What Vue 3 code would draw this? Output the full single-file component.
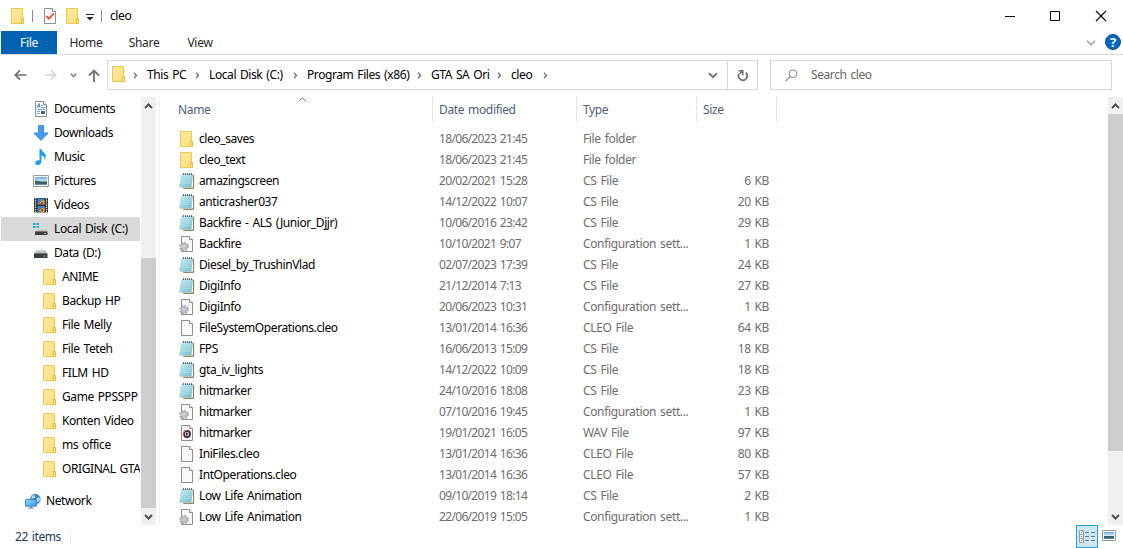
<template>
  <div class="window">
    <svg class="sprite" width="0" height="0">
      <defs>
        <linearGradient id="gFolder" x1="0" y1="0" x2="1" y2="1">
          <stop offset="0" stop-color="#ffe9a2" />
          <stop offset="1" stop-color="#ffdf7c" />
        </linearGradient>
        <linearGradient id="gNote" x1="0" y1="0" x2="1" y2="1">
          <stop offset="0" stop-color="#d2eef4" />
          <stop offset="1" stop-color="#6dbccd" />
        </linearGradient>
        <linearGradient id="gPic" x1="0" y1="0" x2="0" y2="1">
          <stop offset="0" stop-color="#5ea6ea" />
          <stop offset="0.5" stop-color="#d5ecfa" />
          <stop offset="0.6" stop-color="#3d6b5c" />
          <stop offset="0.75" stop-color="#29536a" />
          <stop offset="1" stop-color="#6fa4cb" />
        </linearGradient>
        <linearGradient id="gMonitor" x1="0" y1="0" x2="1" y2="1">
          <stop offset="0" stop-color="#8fdcff" />
          <stop offset="1" stop-color="#2a9de8" />
        </linearGradient>
        <linearGradient id="gDisk" x1="0" y1="0" x2="0" y2="1">
          <stop offset="0" stop-color="#d5d7d9" />
          <stop offset="1" stop-color="#a9abad" />
        </linearGradient>
      </defs>
      <symbol id="folder" viewBox="0 0 16 16">
        <path d="M1.5.5h11v9.5l1 .5v5h-12z" fill="url(#gFolder)" stroke="#edc94f" />
        <path d="M11.5 15.5v-5h2v5z" fill="#ffe594" stroke="#e6bd3c" />
      </symbol>
      <symbol id="note" viewBox="0 0 16 16">
        <path d="M4 2h10.500v13H4z" fill="#fff" stroke="#b9ab86" />
        <path d="M14.600 2v13.400H4.500" fill="none" stroke="#8d7b51" />
        <path d="M2.800 1.500h10.900l-1.500 12.700H.5z" fill="url(#gNote)" stroke="#8fbfca" stroke-width=".5" />
        <path d="M3 4.500h9.500M2.700 6.500h9.500M2.400 8.500h9.500M2 10.500h9.500" stroke="#a8dbe6" stroke-width=".7" />
        <path d="M4 1h10" stroke="#39474b" stroke-width="1.500" stroke-dasharray="1 1" />
      </symbol>
      <symbol id="file" viewBox="0 0 16 16">
        <path d="M2.5.5h8l3 3v12h-11z" fill="#f9f9f9" stroke="#8f8f8f" />
        <path d="M10.5.5v3h3" fill="#fff" stroke="#8f8f8f" />
      </symbol>
      <symbol id="config" viewBox="0 0 16 16">
        <path d="M2.5.5h8l3 3v12h-11z" fill="#f9f9f9" stroke="#8f8f8f" />
        <path d="M10.5.5v3h3" fill="#fff" stroke="#8f8f8f" />
        <circle cx="5" cy="10.6" r="4" fill="none" stroke="#9ba1a6" stroke-width="1.700" stroke-dasharray="1.6 1.54" />
        <circle cx="5" cy="10.6" r="2.7" fill="#e6eaed" stroke="#b0b6ba" stroke-width="1.6" />
        <circle cx="5" cy="10.6" r="1" fill="#fff" stroke="#8b9196" stroke-width=".6" />
      </symbol>
      <symbol id="wav" viewBox="0 0 16 16">
        <path d="M2.5.5h8l3 3v12h-11z" fill="#f9f9f9" stroke="#8f8f8f" />
        <path d="M10.5.5v3h3" fill="#fff" stroke="#8f8f8f" />
        <circle cx="8" cy="9" r="3" fill="#fff" stroke="#41284f" stroke-width="1.900" />
        <path d="M4.500 10.500A3.800 3.800 0 0 1 8 5.300" fill="none" stroke="#e8772c" stroke-width="1" />
        <path d="M7 7.200l2.700 1.800L7 10.800z" fill="#222" />
      </symbol>
      <symbol id="documents" viewBox="0 0 16 16">
        <path d="M2.5.5h8l3 3v12h-11z" fill="#fff" stroke="#8f8f8f" />
        <path d="M10.5.5v3h3" fill="#fff" stroke="#8f8f8f" />
        <path d="M4.200 6.500L6 3l1 3.500" fill="none" stroke="#3c8fd6" stroke-width="1.3" />
        <path d="M8 4.500h2M8 6.500h4M4 8.500h8M4 10.500h3M4 12.500h3" stroke="#69a5d8" />
        <path d="M8 10h4v3H8z" fill="#356f99" />
      </symbol>
      <symbol id="downloads" viewBox="0 0 16 16">
        <path d="M5.500.5h5v7.500h4.700L8 15.500.8 8h4.700z" fill="#3f9bec" stroke="#2d82d2" stroke-width=".8" />
      </symbol>
      <symbol id="music" viewBox="0 0 16 16">
        <path d="M6.500 0h1.800c.3 2.700 4.900 4 4.500 7.600-.1 1.500-.8 2.400-1.500 3.100.6-2.500-.7-3.800-2.900-4.500v6.100c0 2.100-1.600 3.700-3.600 3.700-1.500 0-2.500-.9-2.500-2.100 0-1.700 1.900-3 4.200-2.600z" fill="#169df0" />
      </symbol>
      <symbol id="pictures" viewBox="0 0 16 16">
        <path d="M.5 2.500h15v11H.5z" fill="#fff" stroke="#9a9a9a" />
        <path d="M2 4h12v8H2z" fill="url(#gPic)" />
        <path d="M2 7.500l3 .3 5 1.700H2z" fill="#3c6d43" />
      </symbol>
      <symbol id="videos" viewBox="0 0 16 16">
        <path d="M1 1h14v14.500H1z" fill="#333" />
        <path d="M2.500 1v14.500M13.500 1v14.500" stroke="#eee" stroke-width="1.2" stroke-dasharray="1.200 1" />
        <path d="M4.500 1.500h7v6h-7zM4.500 9h7v6h-7z" fill="#3f7fc4" />
        <path d="M6 7l2-3 3.500-1v4.500zM6 14.500l2-3 3.500-1v4.500z" fill="#e2a02b" />
        <path d="M8 5h2v2H8zM8 12h2v2H8z" fill="#ba3f35" />
        <path d="M4.500 6l2 1.500h-2zM4.500 13l2 2h-2z" fill="#3f9657" />
      </symbol>
      <symbol id="system-disk" viewBox="0 0 16 16">
        <path d="M0 2h2.500v2H0zM3.500 2H6v2H3.500zM0 5h2.500v2H0zM3.500 5H6v2H3.500z" fill="#19b4ee" />
        <path d="M4.500 8h8.500l1.500 3H2z" fill="url(#gDisk)" />
        <path d="M2 10.500h12.500V14H2z" fill="#3a3d3f" />
        <path d="M11 12h2v1h-2z" fill="#52e35f" />
      </symbol>
      <symbol id="disk" viewBox="0 0 16 16">
        <path d="M3.500 5h9l2 4H1z" fill="url(#gDisk)" />
        <path d="M1 8.500h13.500V13H1z" fill="#3a3d3f" />
        <path d="M10.500 10.500h2v1.100h-2z" fill="#52e35f" />
      </symbol>
      <symbol id="network" viewBox="0 0 17 16">
        <circle cx="11" cy="6" r="5.600" fill="#3b87b8" />
        <path d="M7 3c2-2 4-1 4 .5S8 6 7 5zM12 5c2-1 4-1 4 1s-2 4-3 3z" fill="#a9d5e8" />
        <path d="M.5 6.500h11.500v7H.5z" fill="url(#gMonitor)" stroke="#3a86b7" />
        <path d="M5.500 14h2v1.500h-2z" fill="#5c8fae" />
        <path d="M3.500 15.500h6" stroke="#5c8fae" />
      </symbol>
      <symbol id="check" viewBox="0 0 16 16">
        <path d="M2.500.5h8l3 3v12h-11z" fill="#fafafa" stroke="#8f8f8f" />
        <path d="M10.500.5v3h3" fill="#fff" stroke="#8f8f8f" />
        <path d="M4.500 8.200l2.300 2.500 5-5" fill="none" stroke="#e8542a" stroke-width="1.8" />
      </symbol>
    </svg>

    <header class="titlebar">
      <svg class="icon"><use href="#folder" /></svg>
      <span class="divider first"></span>
      <svg class="icon check"><use href="#check" /></svg>
      <svg class="icon quick"><use href="#folder" /></svg>
      <svg class="customize" width="8" height="7" viewBox="0 0 8 7">
        <path d="M0 .5h8" stroke="#222" />
        <path d="M.5 3h7L4 6.500z" fill="#222" />
      </svg>
      <span class="divider"></span>
      <span class="title">cleo</span>
      <div class="controls">
        <svg width="12" height="12" viewBox="0 0 12 12"><path d="M1 6.500h10" stroke="#000" /></svg>
        <svg width="12" height="12" viewBox="0 0 12 12"><path d="M1.500 1.500h9v9h-9z" fill="none" stroke="#000" /></svg>
        <svg width="12" height="12" viewBox="0 0 12 12"><path d="M1 1l10 10M11 1L1 11" stroke="#000" stroke-width="1.100" /></svg>
      </div>
    </header>

    <nav class="ribbon">
      <button class="tab file-tab">File</button>
      <button v-for="tab in tabs" :key="tab.label" class="tab" :style="{ width: tab.width + 'px' }">{{ tab.label }}</button>
      <svg class="expand" width="10" height="6" viewBox="0 0 10 6"><path d="M1 .8l4 4 4-4" fill="none" stroke="#9a9a9a" stroke-width="1.300" /></svg>
      <span class="help">?</span>
    </nav>

    <div class="address-row">
      <svg class="nav back" width="14" height="12" viewBox="0 0 14 12"><path d="M12.500 6H1.500M6 1.300L1.300 6l4.700 4.700" fill="none" stroke="#6f6f6f" stroke-width="1.700" /></svg>
      <svg class="nav forward" width="14" height="12" viewBox="0 0 14 12"><path d="M.5 6h11M7 1.300L11.700 6 7 10.700" fill="none" stroke="#d2d2d2" stroke-width="1.500" /></svg>
      <svg class="nav recent" width="7" height="5" viewBox="0 0 7 5"><path d="M.8.8l2.700 2.700L6.200.8" fill="none" stroke="#777" stroke-width="1.400" /></svg>
      <svg class="nav up" width="12" height="13" viewBox="0 0 12 13"><path d="M6 13V2M1 6.500l5-5 5 5" fill="none" stroke="#757575" stroke-width="1.900" /></svg>
      <div class="address">
        <svg class="icon"><use href="#folder" /></svg>
        <svg class="chevron" width="5" height="7" viewBox="0 0 5 7"><path d="M1 .8l2.500 2.700L1 6.200" fill="none" stroke="#707070" stroke-width="1.300" /></svg>
        <div v-for="crumb in crumbs" :key="crumb.label" class="crumb" :style="{ width: crumb.width + 'px' }">
          <span>{{ crumb.label }}</span>
          <svg class="chevron" width="5" height="7" viewBox="0 0 5 7"><path d="M1 .8l2.500 2.700L1 6.200" fill="none" stroke="#707070" stroke-width="1.300" /></svg>
        </div>
        <svg class="history" width="10" height="7" viewBox="0 0 10 7"><path d="M1 1.200l4 4 4-4" fill="none" stroke="#6f6f6f" stroke-width="1.900" /></svg>
        <div class="refresh">
          <svg width="12" height="13" viewBox="0 0 12 13">
            <path d="M2 5A4.300 4.300 0 1 0 8.700 3.700" fill="none" stroke="#6d6d6d" stroke-width="1.700" />
            <path d="M1.500 1.800h4.300v4.400M5.800 1.800L2.500 5" fill="none" stroke="#6d6d6d" stroke-width="1.500" />
          </svg>
        </div>
      </div>
      <div class="search">
        <svg width="13" height="13" viewBox="0 0 13 13"><circle cx="8" cy="4.700" r="3.900" fill="none" stroke="#8b8490" /><path d="M5.200 7.500L.5 12.200" stroke="#8b8490" stroke-width="1.200" /></svg>
        <span>Search cleo</span>
      </div>
    </div>

    <div class="body">
      <aside class="tree">
        <div v-for="item in treeItems" :key="item.label" class="tree-item" :class="[item.level, { selected: item.selected }]">
          <svg class="icon"><use :href="'#' + item.icon" /></svg>
          <span>{{ item.label }}</span>
        </div>
      </aside>
      <div class="scrollbar tree-scroll">
        <svg class="arrow" width="9" height="6" viewBox="0 0 9 6"><path d="M1 5l3.500-3.500L8 5" fill="none" stroke="#505050" stroke-width="2" /></svg>
        <div class="thumb"></div>
        <svg class="arrow" width="9" height="6" viewBox="0 0 9 6"><path d="M1 1l3.500 3.500L8 1" fill="none" stroke="#505050" stroke-width="2" /></svg>
      </div>
      <div class="splitter"></div>

      <main class="list">
        <div class="columns">
          <div class="col name">
            Name
            <svg class="sort" width="9" height="5" viewBox="0 0 9 5"><path d="M.8 4.500l3.700-3.700 3.700 3.700" fill="none" stroke="#666" /></svg>
          </div>
          <div class="col date">Date modified</div>
          <div class="col type">Type</div>
          <div class="col size">Size</div>
        </div>
        <div class="rows">
          <div v-for="(row, index) in files" :key="index" class="row">
            <svg class="icon"><use :href="'#' + row[0]" /></svg>
            <span class="cell-name">{{ row[1] }}</span>
            <span class="cell-date">{{ row[2] }}</span>
            <span class="cell-type">{{ row[3] }}</span>
            <span class="cell-size">{{ row[4] }}</span>
          </div>
        </div>
      </main>
      <div class="scrollbar list-scroll">
        <svg class="arrow" width="9" height="6" viewBox="0 0 9 6"><path d="M1 5l3.500-3.500L8 5" fill="none" stroke="#505050" stroke-width="2" /></svg>
        <div class="thumb"></div>
        <svg class="arrow" width="9" height="6" viewBox="0 0 9 6"><path d="M1 1l3.500 3.500L8 1" fill="none" stroke="#505050" stroke-width="2" /></svg>
      </div>
    </div>

    <footer class="statusbar">
      <span class="count">22 items</span>
      <span class="status-line"></span>
      <div class="view-btn active">
        <svg width="16" height="13" viewBox="0 0 16 13">
          <path d="M.5.500h4v12h-4zM.5 4.500h4M.5 8.500h4" fill="#fff" stroke="#999" />
          <path d="M2 2h1v1H2z" fill="#555" />
          <path d="M2 6h1v1H2z" fill="#2f7fc0" />
          <path d="M2 10h1v1H2z" fill="#d2232a" />
          <path d="M6 2.500h4M12 2.500h4M6 6.500h4M12 6.500h4M6 10.500h4M12 10.500h4" stroke="#777" />
        </svg>
      </div>
      <svg class="thumb-view" width="14" height="11" viewBox="0 0 14 11">
        <path d="M.5.500h13v10H.5z" fill="#fff" stroke="#999" />
        <path d="M2 2h10v7H2z" fill="url(#gPic)" />
      </svg>
    </footer>
  </div>
</template>

<script setup>
const tabs = [
  { label: 'Home', width: 58 },
  { label: 'Share', width: 58 },
  { label: 'View', width: 54 }
]

const crumbs = [
  { label: 'This PC', width: 62 },
  { label: 'Local Disk (C:)', width: 98 },
  { label: 'Program Files (x86)', width: 124 },
  { label: 'GTA SA Ori', width: 80 },
  { label: 'cleo', width: 46 }
]

const treeItems = [
  { label: 'Documents', icon: 'documents', level: 'mid' },
  { label: 'Downloads', icon: 'downloads', level: 'mid' },
  { label: 'Music', icon: 'music', level: 'mid' },
  { label: 'Pictures', icon: 'pictures', level: 'mid' },
  { label: 'Videos', icon: 'videos', level: 'mid' },
  { label: 'Local Disk (C:)', icon: 'system-disk', level: 'mid', selected: true },
  { label: 'Data (D:)', icon: 'disk', level: 'mid' },
  { label: 'ANIME', icon: 'folder', level: 'deep' },
  { label: 'Backup HP', icon: 'folder', level: 'deep' },
  { label: 'File Melly', icon: 'folder', level: 'deep' },
  { label: 'File Teteh', icon: 'folder', level: 'deep' },
  { label: 'FILM HD', icon: 'folder', level: 'deep' },
  { label: 'Game PPSSPP', icon: 'folder', level: 'deep' },
  { label: 'Konten Video', icon: 'folder', level: 'deep' },
  { label: 'ms office', icon: 'folder', level: 'deep' },
  { label: 'ORIGINAL GTA', icon: 'folder', level: 'deep' },
  { label: 'Network', icon: 'network', level: 'root' }
]

const files = [
  ['folder', 'cleo_saves', '18/06/2023 21:45', 'File folder', ''],
  ['folder', 'cleo_text', '18/06/2023 21:45', 'File folder', ''],
  ['note', 'amazingscreen', '20/02/2021 15:28', 'CS File', '6 KB'],
  ['note', 'anticrasher037', '14/12/2022 10:07', 'CS File', '20 KB'],
  ['note', 'Backfire - ALS (Junior_Djjr)', '10/06/2016 23:42', 'CS File', '29 KB'],
  ['config', 'Backfire', '10/10/2021 9:07', 'Configuration sett...', '1 KB'],
  ['note', 'Diesel_by_TrushinVlad', '02/07/2023 17:39', 'CS File', '24 KB'],
  ['note', 'DigiInfo', '21/12/2014 7:13', 'CS File', '27 KB'],
  ['config', 'DigiInfo', '20/06/2023 10:31', 'Configuration sett...', '1 KB'],
  ['file', 'FileSystemOperations.cleo', '13/01/2014 16:36', 'CLEO File', '64 KB'],
  ['note', 'FPS', '16/06/2013 15:09', 'CS File', '18 KB'],
  ['note', 'gta_iv_lights', '14/12/2022 10:09', 'CS File', '18 KB'],
  ['note', 'hitmarker', '24/10/2016 18:08', 'CS File', '23 KB'],
  ['config', 'hitmarker', '07/10/2016 19:45', 'Configuration sett...', '1 KB'],
  ['wav', 'hitmarker', '19/01/2021 16:05', 'WAV File', '97 KB'],
  ['file', 'IniFiles.cleo', '13/01/2014 16:36', 'CLEO File', '80 KB'],
  ['file', 'IntOperations.cleo', '13/01/2014 16:36', 'CLEO File', '57 KB'],
  ['note', 'Low Life Animation', '09/10/2019 18:14', 'CS File', '2 KB'],
  ['config', 'Low Life Animation', '22/06/2019 15:05', 'Configuration sett...', '1 KB']
]
</script>

<style>
body {
  margin: 0;
  overflow: hidden;
  background: #fff;
}
</style>

<style scoped>
.window {
  width: 1123px;
  height: 548px;
  box-sizing: border-box;
  display: flex;
  flex-direction: column;
  background: #fff;
  color: #000;
  font-family: "Noto Sans", "Open Sans", sans-serif;
  font-size: 12px;
  letter-spacing: -0.41px;
  word-spacing: 1.2px;
  line-height: 16px;
  white-space: nowrap;
  overflow: hidden;
}

.sprite {
  position: absolute;
}

.icon {
  width: 16px;
  height: 16px;
  flex: none;
}

.titlebar {
  height: 31px;
  flex: none;
  display: flex;
  align-items: center;
  padding-left: 10px;
}

.divider {
  width: 1px;
  height: 12px;
  background: #8a8a8a;
}

.divider.first {
  margin: 0 9px 0 6px;
}

.quick {
  margin: 0 5px 0 7px;
}

.customize {
  margin: 3px 7px 0 0;
}

.title {
  margin-left: 8px;
}

.controls {
  margin-left: auto;
  padding-right: 16px;
  display: flex;
  gap: 34px;
}

.controls svg:first-child {
  margin-right: -1px;
}

.ribbon {
  height: 23px;
  flex: none;
  display: flex;
  align-items: stretch;
  padding: 0 2px 0 1px;
  border-bottom: 1px solid #dadada;
}

.tab {
  border: none;
  padding: 0;
  background: transparent;
  color: #262626;
  font: inherit;
  letter-spacing: -0.3px;
  text-align: center;
}

.file-tab {
  width: 56px;
  background: #0063b1;
  color: #fff;
}

.expand {
  margin: 9px 9px 0 auto;
}

.help {
  width: 14px;
  height: 14px;
  margin-top: 3px;
  border: 1px solid #1a4f86;
  border-radius: 50%;
  background: #0067c8;
  color: #fff;
  font-size: 13px;
  font-weight: 700;
  line-height: 14px;
  text-align: center;
}

.address-row {
  height: 42px;
  flex: none;
  box-sizing: border-box;
  display: flex;
  align-items: center;
  padding: 0 11px 2px 14px;
}

.forward {
  margin-left: 16px;
}

.recent {
  margin-left: 12px;
}

.up {
  margin-left: 11px;
}

.address {
  width: 651px;
  height: 30px;
  box-sizing: border-box;
  margin-left: 7px;
  display: flex;
  align-items: center;
  padding-left: 3px;
  border: 1px solid #d9d9d9;
}

.address > .icon {
  margin-top: -2px;
}

.address > .chevron {
  margin: 0 9px 0 6px;
}

.crumb {
  display: flex;
  align-items: center;
  justify-content: space-between;
}

.crumb .chevron {
  margin-right: 9px;
}

.history {
  margin-left: auto;
}

.refresh {
  width: 29px;
  height: 28px;
  margin-left: 9px;
  display: flex;
  align-items: center;
  justify-content: center;
  border-left: 1px solid #d9d9d9;
}

.search {
  width: 342px;
  height: 30px;
  box-sizing: border-box;
  margin-left: 12px;
  display: flex;
  align-items: center;
  gap: 13px;
  padding-left: 14px;
  border: 1px solid #d9d9d9;
  color: #666;
}

.body {
  height: 428px;
  flex: none;
  display: flex;
}

.tree {
  width: 140px;
  flex: none;
  overflow: hidden;
}

.tree-item {
  height: 24px;
  margin-left: 1px;
  display: flex;
  align-items: center;
}

.tree-item.mid {
  padding-left: 32px;
}

.tree-item.deep {
  padding-left: 41px;
}

.tree-item.root {
  margin-top: 8px;
  padding-left: 24px;
}

.tree-item span {
  margin-left: 5px;
}

.tree-item.deep span {
  margin-left: 4px;
}

.tree-item.selected {
  background: #d9d9d9;
}

.scrollbar {
  flex: none;
  display: flex;
  flex-direction: column;
  align-items: center;
  background: #f0f0f0;
}

.tree-scroll {
  width: 15px;
  margin-left: 1px;
}

.scrollbar .arrow {
  margin: 6px 0 5px;
}

.thumb {
  width: 100%;
  background: #cdcdcd;
}

.tree-scroll .thumb {
  height: 250px;
  margin-top: 144px;
}

.list-scroll .thumb {
  height: 337px;
  margin-bottom: auto;
}

.splitter {
  width: 1px;
  margin-left: 3px;
  background: #f3f3f3;
}

.list {
  flex: 1;
  display: flex;
  flex-direction: column;
  overflow: hidden;
}

.columns {
  height: 25px;
  flex: none;
  display: flex;
  color: #4c607a;
  letter-spacing: -0.36px;
}

.col {
  position: relative;
  box-sizing: border-box;
  padding-left: 6px;
  border-right: 1px solid #e5e5e5;
  line-height: 25px;
}

.col.name {
  width: 273px;
  padding-left: 18px;
}

.col.date {
  width: 144px;
}

.col.type {
  width: 120px;
}

.col.size {
  width: 80px;
}

.sort {
  position: absolute;
  left: 138px;
  top: 0;
}

.rows {
  padding-top: 6px;
}

.row {
  height: 21px;
  display: flex;
  align-items: center;
  padding-left: 19px;
  color: #6d6d6d;
}

.cell-name {
  width: 240px;
  margin-left: 4px;
  color: #000;
}

.cell-date {
  width: 144px;
  letter-spacing: -0.67px;
}

.cell-type {
  width: 120px;
  letter-spacing: -0.36px;
}

.cell-size {
  width: 66px;
  text-align: right;
}

.list-scroll {
  width: 15px;
}

.statusbar {
  height: 23px;
  flex: none;
  display: flex;
  align-items: center;
  padding-left: 15px;
  color: #1e395b;
}

.status-line {
  width: 1px;
  height: 14px;
  margin-left: 9px;
  background: #f0f0f0;
}

.view-btn {
  width: 20px;
  height: 21px;
  margin-left: auto;
  display: flex;
  align-items: center;
  justify-content: center;
  border: 1px solid #26a0da;
  background: #cce8f7;
}

.thumb-view {
  margin: 0 7px 2px 4px;
}
</style>
